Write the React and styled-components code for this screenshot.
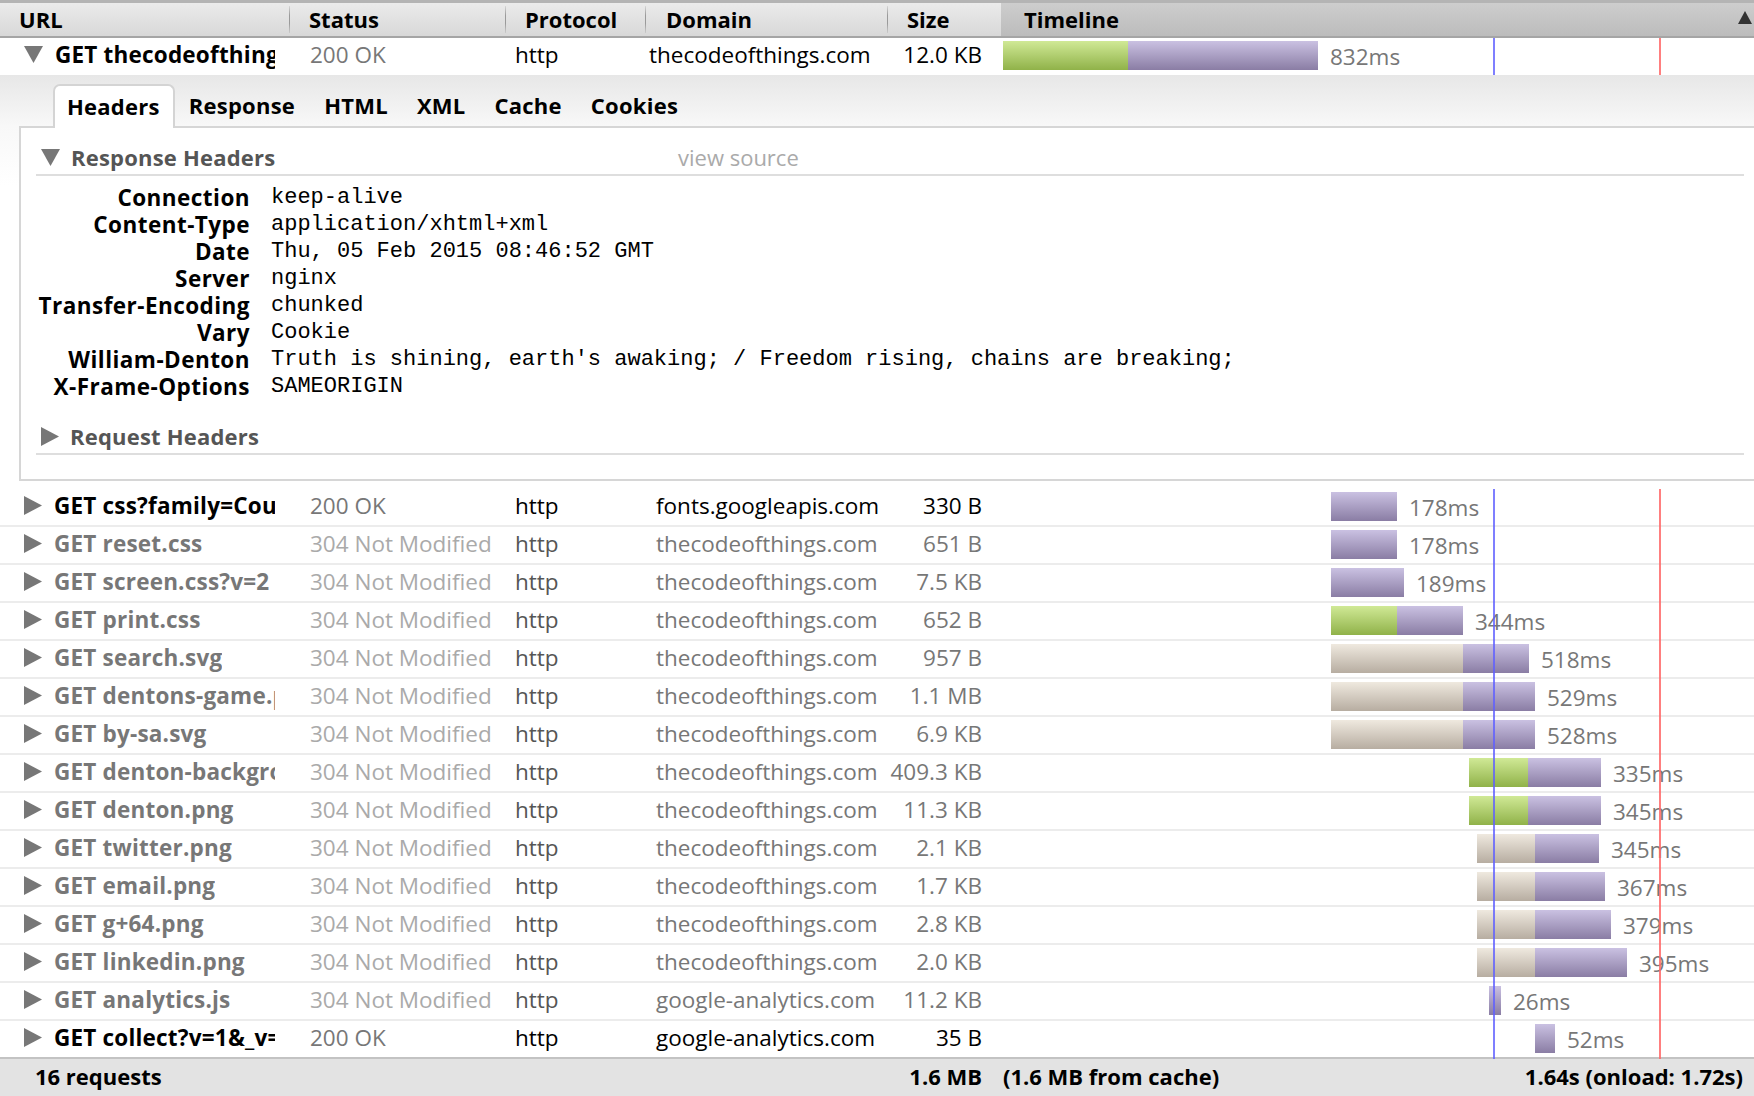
import React from "react"
import styled, { createGlobalStyle } from "styled-components"

const COLUMNS = "289px 216px 140px 242px 114px 1fr"
const PX_PER_MS = 0.3786
const ORIGIN = 2
const DOM_READY = 1297
const ONLOAD = 1735

const msToPx = ms => Math.round(ms * PX_PER_MS)

const BAR_COLORS = {
  green: "linear-gradient(#d0e996, #90b249)",
  purple: "linear-gradient(#cac1e2, #8a7da4)",
  tan: "linear-gradient(#efe9df, #b7ada1)",
}

const GlobalStyle = createGlobalStyle`
  html, body {
    margin: 0;
    padding: 0;
    background: #fff;
  }
  body {
    font-family: "Open Sans", "Liberation Sans", sans-serif;
    font-size: 22.5px;
    color: #000;
    overflow: hidden;
  }
  * {
    box-sizing: border-box;
  }
`

const Net = styled.div`
  width: 1754px;
  height: 1096px;
  display: flex;
  flex-direction: column;
  overflow: hidden;
`

const HeaderBar = styled.div`
  display: grid;
  grid-template-columns: ${COLUMNS};
  height: 38px;
  flex: 0 0 38px;
  border-top: 3px solid #b4b4b4;
  border-bottom: 2px solid #a5a5a5;
  background: linear-gradient(#ebebeb, #d8d8d8);
`

const HeaderCell = styled.div`
  position: relative;
  display: flex;
  align-items: center;
  padding-left: ${({ $pad }) => $pad ?? 20}px;
  padding-right: 2px;
  padding-bottom: 2px;
  font-weight: 700;
  font-size: 22px;
  ${({ $sorted }) => $sorted && "background: linear-gradient(#cdcdcd, #bcbcbc);"}
  ${({ $divider }) =>
    $divider &&
    `
  &::before {
    content: "";
    position: absolute;
    left: 0;
    top: 3px;
    bottom: 3px;
    width: 1px;
    background: linear-gradient(rgba(140,140,140,0.2), #9a9a9a 35%, #9a9a9a 65%, rgba(140,140,140,0.2));
  }
  `}
`

const SortArrow = styled.svg`
  margin-left: auto;
  margin-bottom: 2px;
`

const Row = styled.div`
  display: grid;
  grid-template-columns: ${COLUMNS};
  height: ${({ $open }) => ($open ? 37 : 38)}px;
  flex: 0 0 auto;
  border-bottom: ${({ $open }) => ($open ? "none" : "2px solid #ececec")};
  background: #fff;
`

const Cell = styled.div`
  display: flex;
  align-items: center;
  white-space: nowrap;
  overflow: hidden;
  padding-left: ${({ $pad }) => $pad ?? 0}px;
  padding-right: ${({ $padRight }) => $padRight ?? 0}px;
  padding-bottom: 4px;
  justify-content: ${({ $right }) => ($right ? "flex-end" : "flex-start")};
  color: ${({ $color }) => $color ?? "inherit"};
  font-weight: ${({ $bold }) => ($bold ? 700 : 400)};
`

const UrlCell = styled(Cell)`
  padding-left: 24px;
  padding-right: 14px;
  gap: 12px;
`

const UrlText = styled.span`
  overflow: hidden;
  font-weight: 700;
  font-size: 22.5px;
  letter-spacing: 0.2px;
`

const Triangle = styled.svg`
  flex: 0 0 auto;
  fill: ${({ $color }) => $color ?? "#777"};
`

const TimelineCell = styled.div`
  position: relative;
`

const Track = styled.div`
  position: absolute;
  top: 3px;
  height: 29px;
  display: flex;
  align-items: center;
`

const Segment = styled.div`
  height: 29px;
  background: ${({ $kind }) => BAR_COLORS[$kind]};
`

const Duration = styled.span`
  margin-left: 12px;
  padding-top: 1px;
  color: #777;
  white-space: nowrap;
`

const Marker = styled.div`
  position: absolute;
  top: 0;
  bottom: ${({ $extend }) => ($extend ? -2 : 0)}px;
  width: 2px;
  z-index: 2;
  background: ${({ $kind }) =>
    $kind === "dom" ? "rgba(95, 95, 255, 0.8)" : "rgba(255, 105, 105, 0.85)"};
`

const Details = styled.div`
  flex: 0 0 auto;
  background: linear-gradient(#e7e7e7, #f8f8f8 51px, #fff 110px);
  padding-bottom: 8px;
`

const TabStrip = styled.div`
  height: 51px;
  display: flex;
  align-items: flex-end;
  padding-left: 53px;
`

const Tab = styled.div`
  position: relative;
  z-index: 1;
  height: ${({ $active }) => ($active ? 44 : 42)}px;
  margin-bottom: ${({ $active }) => ($active ? -2 : 0)}px;
  display: flex;
  align-items: center;
  padding: 0 13px 2px 12px;
  font-weight: 700;
  font-size: 22px;
  letter-spacing: 0.25px;
  border: 2px solid ${({ $active }) => ($active ? "#d4d4d4" : "transparent")};
  border-bottom: none;
  border-radius: 7px 7px 0 0;
  background: ${({ $active }) => ($active ? "#fff" : "transparent")};
`

const Panel = styled.div`
  margin-left: 19px;
  border: 2px solid #d6d6d6;
  border-right: none;
  background: #fff;
  padding: 12px 10px 24px 15px;
`

const SectionHead = styled.div`
  height: 36px;
  display: flex;
  align-items: center;
  margin-top: ${({ $first }) => ($first ? 0 : 19)}px;
  padding-left: 5px;
  border-bottom: 2px solid #dedede;
`

const SectionTitle = styled.div`
  flex: 0 0 637px;
  display: flex;
  align-items: center;
  gap: 11px;
  color: #555;
  font-weight: 700;
  font-size: 22px;
  letter-spacing: 0.2px;
`

const ViewSource = styled.span`
  color: #aaa;
  font-size: 22px;
`

const HeaderTable = styled.div`
  display: grid;
  grid-template-columns: 214px 1fr;
  column-gap: 21px;
  margin-top: 8px;
  line-height: 27px;
`

const HeaderName = styled.div`
  display: flex;
  justify-content: flex-end;
  white-space: nowrap;
  font-weight: 700;
  font-size: 22.5px;
  letter-spacing: 0.45px;
`

const HeaderValue = styled.div`
  font-family: "Liberation Mono", "Courier New", monospace;
  font-size: 22px;
  white-space: nowrap;
`

const RowList = styled.div`
  display: flex;
  flex-direction: column;
  & > div:last-child {
    border-bottom-color: #c3c3c3;
  }
`

const Footer = styled.div`
  display: grid;
  grid-template-columns: ${COLUMNS};
  flex: 1;
  background: #e3e3e3;
  font-weight: 700;
  font-size: 22px;
`

const FooterTimeline = styled.div`
  display: flex;
  align-items: center;
  padding-left: 2px;
  padding-right: 11px;
  padding-bottom: 3px;
  white-space: nowrap;
  span:last-child {
    margin-left: auto;
  }
`

const RightTriangle = () => (
  <Triangle width="18" height="19" viewBox="0 0 18 19">
    <polygon points="0,0 18,9.5 0,19" />
  </Triangle>
)

const DownTriangle = () => (
  <Triangle width="19" height="17" viewBox="0 0 19 17">
    <polygon points="0,0 19,0 9.5,17" />
  </Triangle>
)

const main = {
  url: "GET thecodeofthings.com/",
  status: "200 OK",
  domain: "thecodeofthings.com",
  size: "12.0 KB",
  start: 0,
  parts: [
    ["green", 330],
    ["purple", 502],
  ],
  time: "832ms",
}

const requests = [
  { url: "GET css?family=Cousine", status: "200 OK", domain: "fonts.googleapis.com", size: "330 B", start: 866, parts: [["purple", 174]], time: "178ms" },
  { url: "GET reset.css", cached: true, domain: "thecodeofthings.com", size: "651 B", start: 866, parts: [["purple", 174]], time: "178ms" },
  { url: "GET screen.css?v=2", cached: true, domain: "thecodeofthings.com", size: "7.5 KB", start: 866, parts: [["purple", 193]], time: "189ms" },
  { url: "GET print.css", cached: true, domain: "thecodeofthings.com", size: "652 B", start: 866, parts: [["green", 174], ["purple", 174]], time: "344ms" },
  { url: "GET search.svg", cached: true, domain: "thecodeofthings.com", size: "957 B", start: 866, parts: [["tan", 349], ["purple", 174]], time: "518ms" },
  { url: "GET dentons-game.png", cached: true, domain: "thecodeofthings.com", size: "1.1 MB", start: 866, parts: [["tan", 349], ["purple", 190]], time: "529ms" },
  { url: "GET by-sa.svg", cached: true, domain: "thecodeofthings.com", size: "6.9 KB", start: 866, parts: [["tan", 349], ["purple", 190]], time: "528ms" },
  { url: "GET denton-background.png", cached: true, domain: "thecodeofthings.com", size: "409.3 KB", start: 1231, parts: [["green", 156], ["purple", 193]], time: "335ms" },
  { url: "GET denton.png", cached: true, domain: "thecodeofthings.com", size: "11.3 KB", start: 1231, parts: [["green", 156], ["purple", 193]], time: "345ms" },
  { url: "GET twitter.png", cached: true, domain: "thecodeofthings.com", size: "2.1 KB", start: 1252, parts: [["tan", 153], ["purple", 170]], time: "345ms" },
  { url: "GET email.png", cached: true, domain: "thecodeofthings.com", size: "1.7 KB", start: 1252, parts: [["tan", 153], ["purple", 186]], time: "367ms" },
  { url: "GET g+64.png", cached: true, domain: "thecodeofthings.com", size: "2.8 KB", start: 1252, parts: [["tan", 153], ["purple", 202]], time: "379ms" },
  { url: "GET linkedin.png", cached: true, domain: "thecodeofthings.com", size: "2.0 KB", start: 1252, parts: [["tan", 153], ["purple", 243]], time: "395ms" },
  { url: "GET analytics.js", cached: true, domain: "google-analytics.com", size: "11.2 KB", start: 1284, parts: [["purple", 32]], time: "26ms" },
  { url: "GET collect?v=1&_v=j33", status: "200 OK", domain: "google-analytics.com", size: "35 B", start: 1405, parts: [["purple", 53]], time: "52ms" },
]

const responseHeaders = [
  ["Connection", "keep-alive"],
  ["Content-Type", "application/xhtml+xml"],
  ["Date", "Thu, 05 Feb 2015 08:46:52 GMT"],
  ["Server", "nginx"],
  ["Transfer-Encoding", "chunked"],
  ["Vary", "Cookie"],
  ["William-Denton", "Truth is shining, earth's awaking; / Freedom rising, chains are breaking;"],
  ["X-Frame-Options", "SAMEORIGIN"],
]

const tabs = ["Headers", "Response", "HTML", "XML", "Cache", "Cookies"]

const Timeline = ({ start, parts, time, extend }) => (
  <TimelineCell>
    <Track style={{ left: ORIGIN + msToPx(start) }}>
      {parts.map(([kind, ms], i) => (
        <Segment key={i} $kind={kind} style={{ width: msToPx(ms) }} />
      ))}
      <Duration>{time}</Duration>
    </Track>
    <Marker $kind="dom" $extend={extend} style={{ left: ORIGIN + msToPx(DOM_READY) - 1 }} />
    <Marker $kind="load" $extend={extend} style={{ left: ORIGIN + msToPx(ONLOAD) - 1 }} />
  </TimelineCell>
)

const RequestRow = ({ req, open }) => {
  const cached = req.cached
  return (
    <Row $open={open}>
      <UrlCell $color={cached ? "#777" : "#000"}>
        {open ? <DownTriangle /> : <RightTriangle />}
        <UrlText>{req.url}</UrlText>
      </UrlCell>
      <Cell $pad={21} $color={cached ? "#aaa" : "#777"}>
        {cached ? "304 Not Modified" : req.status}
      </Cell>
      <Cell $pad={10} $color={cached ? "#555" : "#000"}>
        http
      </Cell>
      <Cell $pad={open ? 4 : 11} $color={cached ? "#777" : "#000"}>
        {req.domain}
      </Cell>
      <Cell $right $padRight={19} $color={cached ? "#777" : "#000"}>
        {req.size}
      </Cell>
      <Timeline start={req.start} parts={req.parts} time={req.time} extend={!open} />
    </Row>
  )
}

const HeadersSection = () => (
  <Panel>
    <SectionHead $first>
      <SectionTitle>
        <DownTriangle />
        Response Headers
      </SectionTitle>
      <ViewSource>view source</ViewSource>
    </SectionHead>
    <HeaderTable>
      {responseHeaders.map(([name, value]) => (
        <React.Fragment key={name}>
          <HeaderName>{name}</HeaderName>
          <HeaderValue>{value}</HeaderValue>
        </React.Fragment>
      ))}
    </HeaderTable>
    <SectionHead>
      <SectionTitle>
        <RightTriangle />
        Request Headers
      </SectionTitle>
    </SectionHead>
  </Panel>
)

export default function App() {
  return (
    <Net>
      <GlobalStyle />
      <HeaderBar>
        <HeaderCell $pad={19}>URL</HeaderCell>
        <HeaderCell $divider>Status</HeaderCell>
        <HeaderCell $divider>Protocol</HeaderCell>
        <HeaderCell $divider $pad={21}>Domain</HeaderCell>
        <HeaderCell $divider>Size</HeaderCell>
        <HeaderCell $sorted $pad={23}>
          Timeline
          <SortArrow width="14" height="13" viewBox="0 0 14 13">
            <polygon points="7,0 14,13 0,13" fill="#333" />
          </SortArrow>
        </HeaderCell>
      </HeaderBar>
      <RequestRow req={main} open />
      <Details>
        <TabStrip>
          {tabs.map((t, i) => (
            <Tab key={t} $active={i === 0}>
              {t}
            </Tab>
          ))}
        </TabStrip>
        <HeadersSection />
      </Details>
      <RowList>
        {requests.map(r => (
          <RequestRow key={r.url} req={r} />
        ))}
      </RowList>
      <Footer>
        <Cell $pad={35} $bold>
          16 requests
        </Cell>
        <div />
        <div />
        <div />
        <Cell $right $padRight={19} $bold>
          1.6 MB
        </Cell>
        <FooterTimeline>
          <span>(1.6 MB from cache)</span>
          <span>1.64s (onload: 1.72s)</span>
        </FooterTimeline>
      </Footer>
    </Net>
  )
}
